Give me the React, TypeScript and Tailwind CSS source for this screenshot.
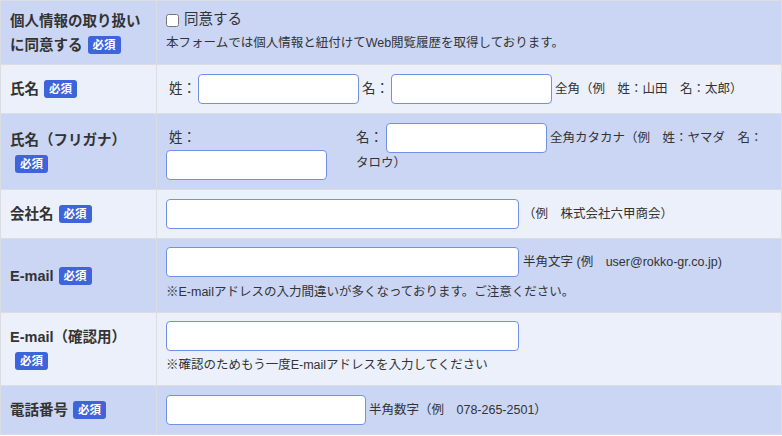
import React from "react";

const Badge = () => (
  <span className="inline-block align-middle ml-[5px] px-[5px] rounded-[3px] bg-[#3d64d8] text-white text-[11.5px] leading-[18px] font-bold relative -top-[1px]">
    必須
  </span>
);

const Field = ({ w }: { w: string }) => (
  <input
    type="text"
    className={`${w} h-[30px] shrink-0 rounded-[4px] border border-[#6f92e6] bg-white outline-none`}
  />
);

type RowProps = {
  dark?: boolean;
  label: React.ReactNode;
  children: React.ReactNode;
  pad: string;
};

const Row = ({ dark, label, children, pad }: RowProps) => (
  <div className={`flex border-t border-[#dcdde3] ${dark ? "bg-[#cbd6f5]" : "bg-[#ecf0fa]"}`}>
    <div className="w-[156px] shrink-0 border-r border-[#dcdde3] pl-[9px] pr-[6px] flex items-center">
      <div className="text-[14.5px] leading-[24px] font-bold text-[#333]">{label}</div>
    </div>
    <div className={`flex-1 px-[9px] ${pad} text-[#333]`}>{children}</div>
  </div>
);

export default function App() {
  return (
    <div className="w-[782px] h-[436px] overflow-hidden bg-white font-['Liberation_Sans','Noto_Sans_CJK_JP',sans-serif]">
      <div className="border-x border-b border-[#dcdde3]">
        <Row
          dark
          pad="pt-[8px] pb-[11px]"
          label={
            <>
              個人情報の取り扱い
              <br />
              に同意する
              <Badge />
            </>
          }
        >
          <label className="flex items-center h-[22px] text-[14.5px]">
            <input type="checkbox" className="w-[13px] h-[13px] m-0 mr-[5px]" />
            同意する
          </label>
          <p className="mt-[2px] text-[12.5px] leading-[20px]">
            本フォームでは個人情報と紐付けてWeb閲覧履歴を取得しております。
          </p>
        </Row>

        <Row pad="py-[9px]" label={<>氏名<Badge /></>}>
          <div className="flex items-center">
            <span className="text-[13.5px] pl-[3px] w-[32px]">姓：</span>
            <Field w="w-[161px]" />
            <span className="text-[13.5px] pl-[3px] w-[32px]">名：</span>
            <Field w="w-[161px]" />
            <span className="text-[12.5px] pl-[3px]">全角（例　姓：山田　名：太郎）</span>
          </div>
        </Row>

        <Row
          dark
          pad="py-[9px]"
          label={
            <>
              氏名（フリガナ）
              <br />
              <Badge />
            </>
          }
        >
          <div className="flex items-start">
            <div className="w-[190px] shrink-0">
              <div className="h-[27px] pt-[3px] flex items-center text-[13.5px] pl-[3px]">姓：</div>
              <Field w="w-[161px]" />
            </div>
            <div>
              <div className="flex items-center">
                <span className="text-[13.5px] w-[30px]">名：</span>
                <Field w="w-[161px]" />
                <span className="text-[12.5px] pl-[3px]">全角カタカナ（例　姓：ヤマダ　名：</span>
              </div>
              <div className="text-[12.5px] leading-[20px]">タロウ）</div>
            </div>
          </div>
        </Row>

        <Row pad="py-[9px]" label={<>会社名<Badge /></>}>
          <div className="flex items-center">
            <Field w="w-[353px]" />
            <span className="text-[12.5px] pl-[4px]">（例　株式会社六甲商会）</span>
          </div>
        </Row>

        <Row dark pad="pt-[8px] pb-[10px]" label={<>E-mail<Badge /></>}>
          <div className="flex items-center">
            <Field w="w-[353px]" />
            <span className="text-[12.5px] pl-[4px]">半角文字 (例　user@rokko-gr.co.jp)</span>
          </div>
          <p className="mt-[5px] text-[12.5px] leading-[20px]">
            ※E-mailアドレスの入力間違いが多くなっております。ご注意ください。
          </p>
        </Row>

        <Row
          pad="pt-[8px] pb-[10px]"
          label={
            <>
              E-mail（確認用）
              <br />
              <Badge />
            </>
          }
        >
          <Field w="w-[353px]" />
          <p className="mt-[4px] text-[12.5px] leading-[20px]">
            ※確認のためもう一度E-mailアドレスを入力してください
          </p>
        </Row>

        <Row dark pad="py-[9px]" label={<>電話番号<Badge /></>}>
          <div className="flex items-center">
            <Field w="w-[200px]" />
            <span className="text-[12.5px] pl-[3px]">半角数字（例　078-265-2501）</span>
          </div>
        </Row>
      </div>
    </div>
  );
}
